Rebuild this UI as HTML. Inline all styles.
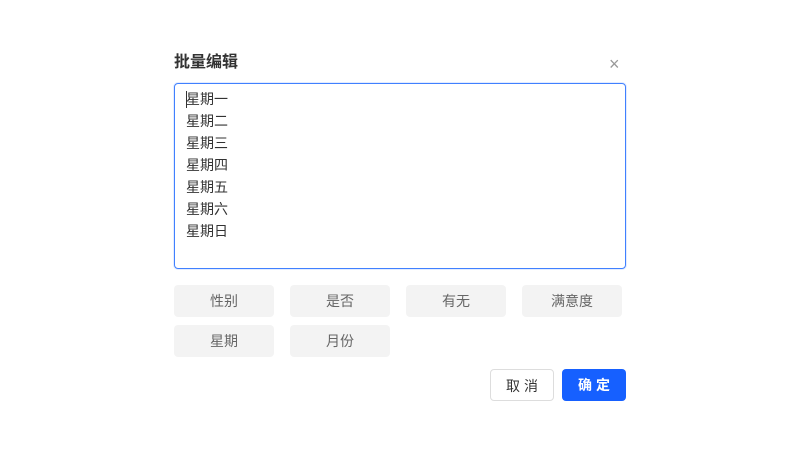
<!DOCTYPE html><html><head><meta charset="utf-8"><style>
body{margin:0;width:800px;height:450px;background:#fff;font-family:"Liberation Sans","Noto Sans CJK SC",sans-serif;position:relative;overflow:hidden}
.t{position:absolute;left:174px;top:52px;font-size:16px;font-weight:bold;color:#333;line-height:22px}
.x{position:absolute;left:609px;top:55px;font-size:18px;color:#999;line-height:18px}
.ta{position:absolute;left:174px;top:83px;width:450px;height:184px;border:1px solid #4080ff;border-radius:4px;box-shadow:0 0 0 1px #e3ecff}
.ta div{position:absolute;left:11px;top:4px;font-size:14px;line-height:22px;color:#333}
.cur{position:absolute;left:11px;top:7px;width:1px;height:17px;background:#333}
.tag{position:absolute;width:100px;height:32px;background:#f3f3f3;border-radius:4px;font-size:14px;color:#666;text-align:center;line-height:32px}
.b{position:absolute;top:369px;width:64px;height:32px;border-radius:4px;font-size:14px;text-align:center;line-height:32px;box-sizing:border-box;letter-spacing:4px;text-indent:4px}
</style></head><body>
<div class="t">批量编辑</div><div class="x">×</div>
<div class="ta"><span class="cur"></span><div>星期一<br>星期二<br>星期三<br>星期四<br>星期五<br>星期六<br>星期日</div></div>
<div class="tag" style="left:174px;top:285px">性别</div>
<div class="tag" style="left:290px;top:285px">是否</div>
<div class="tag" style="left:406px;top:285px">有无</div>
<div class="tag" style="left:522px;top:285px">满意度</div>
<div class="tag" style="left:174px;top:325px">星期</div>
<div class="tag" style="left:290px;top:325px">月份</div>
<div class="b" style="left:490px;border:1px solid #ddd;color:#333;background:#fff">取消</div>
<div class="b" style="left:562px;background:#1660ff;color:#fff;font-weight:bold">确定</div>
</body></html>
